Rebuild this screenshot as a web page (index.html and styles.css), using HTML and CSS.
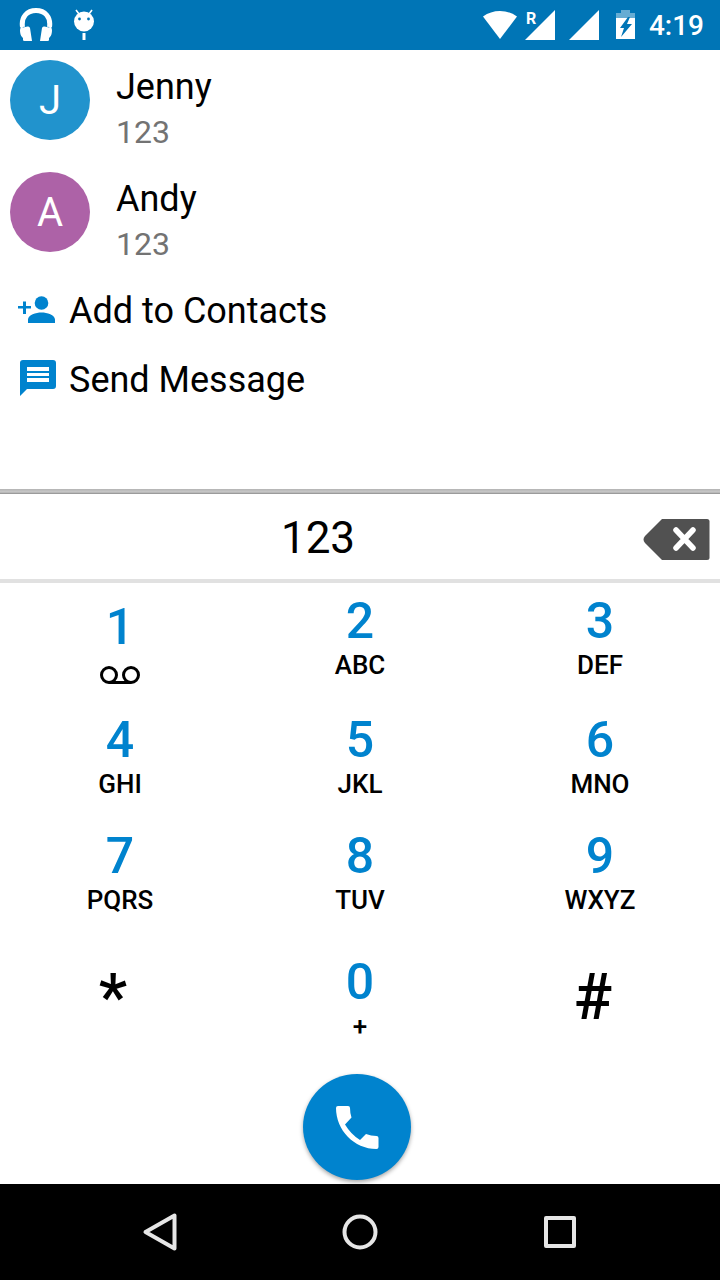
FILE: index.html
```html
<!DOCTYPE html>
<html lang="en">
<head>
<meta charset="utf-8">
<meta name="viewport" content="width=device-width, initial-scale=1">
<title>Dialer</title>
<link rel="stylesheet" href="styles.css">
</head>
<body>
<div class="app">
  <header class="status">
    <div class="status-group">
      <svg class="icon-headphones" width="34" height="34" viewBox="0 0 34 34" aria-hidden="true">
        <path d="M3.500 19C2 9 8 2.500 17 2.500S32 9 30.500 19" fill="none" stroke="#fff" stroke-width="5"/>
        <path d="M2 18L1 22q0 5 2 7l1 1v2q0 1 1.500 1H13l-2-13q-.5-2-2.500-1.500L4 19.500zM32 18l1 4q0 5-2 7l-1 1v2q0 1-1.500 1H21l2-13q.5-2 2.500-1.500l4.500 1z" fill="#fff"/>
      </svg>
      <svg width="20" height="32" viewBox="0 0 20 32" aria-hidden="true">
        <circle cx="10" cy="12.500" r="10" fill="#fff"/>
        <path d="M5 5L2 1M15 5l3-4" stroke="#fff" stroke-width="1.600"/>
        <circle cx="5.500" cy="10" r="1.400" fill="#0075b6"/><circle cx="14.500" cy="10" r="1.400" fill="#0075b6"/>
        <path d="M8.500 24h3v7h-3z" fill="#fff"/>
      </svg>
    </div>
    <div class="status-group status-right">
      <svg class="icon-wifi" width="34" height="30" viewBox="0 0 34 30" aria-hidden="true"><path d="M0 6.500Q7.500 1 17 1t17 5.500L17 29z" fill="#fff"/></svg>
      <span class="roaming"><span class="roaming-mark">R</span><svg width="30" height="30" viewBox="0 0 30 30" aria-hidden="true"><path d="M30 0v30H0z" fill="#fff"/></svg></span>
      <svg class="icon-signal" width="30" height="30" viewBox="0 0 30 30" aria-hidden="true"><path d="M30 0v30H0z" fill="#fff"/></svg>
      <svg class="icon-battery" width="20" height="30" viewBox="0 0 20 30" aria-hidden="true">
        <path d="M0 3h5V0h9v3h5v5H0z" fill="#66acd3"/><path d="M0 8h19v21H0z" fill="#fff"/>
        <path d="M12 7L4 18h4l-3 9L16 14h-5l3-7z" fill="#0075b6"/>
      </svg>
      <time class="clock">4:19</time>
    </div>
  </header>

  <main class="dialer">
    <section class="results">
      <a class="contact" href="#jenny">
        <span class="avatar avatar-blue">J</span>
        <span class="contact-text"><span class="contact-name">Jenny</span><span class="contact-number">123</span></span>
      </a>
      <a class="contact" href="#andy">
        <span class="avatar avatar-purple">A</span>
        <span class="contact-text"><span class="contact-name">Andy</span><span class="contact-number">123</span></span>
      </a>
      <div class="actions">
        <button class="action" type="button">
          <svg width="40" height="40" viewBox="0 0 40 40" aria-hidden="true"><circle cx="23.500" cy="12" r="6.800" fill="#0083ce"/><path d="M10 32v-3.500C10 24 18 21.500 23.500 21.500S37 24 37 28.500V32zM5 10.500h3V15h5v2.500H8V23H5v-5.500H0V15h5z" fill="#0083ce"/></svg>
          Add to Contacts
        </button>
        <button class="action" type="button">
          <svg width="40" height="40" viewBox="0 0 40 40" aria-hidden="true"><path d="M5 0h30q3 0 3 3v23q0 3-3 3H9l-7 7V3q0-3 3-3z" fill="#0083ce"/><path d="M9 7h22v4H9zM9 13h22v3H9zM9 18h22v4H9z" fill="#fff"/></svg>
          Send Message
        </button>
      </div>
    </section>

    <section class="entry">
      <input class="entry-number" type="tel" value="123" aria-label="Phone number">
      <button class="backspace" type="button" aria-label="Delete">
        <svg width="68" height="44" viewBox="0 0 68 44" aria-hidden="true"><path d="M20 1h45q2.500 0 2.500 2.500v36q0 2.500-2.500 2.500H20L3 25q-3-3.500 0-7z" fill="#515151"/><path d="M34 12l17 18M51 12L34 30" stroke="#fff" stroke-width="5.500" stroke-linecap="round"/></svg>
      </button>
    </section>

    <section class="keypad">
      <button class="key key-voicemail" type="button" aria-label="1 voicemail"><span class="digit">1</span>
        <svg width="40" height="18" viewBox="0 0 40 18" aria-hidden="true"><g fill="none" stroke="#000" stroke-width="3"><circle cx="9" cy="9" r="7.500"/><circle cx="31" cy="9" r="7.500"/><path d="M9 16.500h22"/></g></svg></button>
      <button class="key" type="button"><span class="digit">2</span><span class="letters">ABC</span></button>
      <button class="key" type="button"><span class="digit">3</span><span class="letters">DEF</span></button>
      <button class="key" type="button"><span class="digit">4</span><span class="letters">GHI</span></button>
      <button class="key" type="button"><span class="digit">5</span><span class="letters">JKL</span></button>
      <button class="key" type="button"><span class="digit">6</span><span class="letters">MNO</span></button>
      <button class="key" type="button"><span class="digit">7</span><span class="letters">PQRS</span></button>
      <button class="key" type="button"><span class="digit">8</span><span class="letters">TUV</span></button>
      <button class="key" type="button"><span class="digit">9</span><span class="letters">WXYZ</span></button>
      <button class="key key-symbol" type="button">*</button>
      <button class="key" type="button"><span class="digit">0</span><span class="letters">+</span></button>
      <button class="key key-symbol" type="button">#</button>
    </section>

    <div class="call-row">
      <button class="call" type="button" aria-label="Call">
        <svg width="44" height="44" viewBox="0 0 44 44" aria-hidden="true"><path d="M3 1h10q2 0 2 2 0 5 1.500 9.500L10 19.500q6 10 15 15.500l6-6q5 2 10.500 2 2 0 2 2v9q0 2-2 2C19 44 1 25 1 3q0-2 2-2z" fill="#fff"/></svg>
      </button>
    </div>
  </main>

  <nav class="navbar">
    <button type="button" aria-label="Back"><svg width="40" height="40" viewBox="0 0 40 40" aria-hidden="true"><path d="M34.500 3.500v33L5.500 20z"/></svg></button>
    <button type="button" aria-label="Home"><svg width="40" height="40" viewBox="0 0 40 40" aria-hidden="true"><circle cx="20" cy="20" r="15.500"/></svg></button>
    <button type="button" aria-label="Recent apps"><svg width="40" height="40" viewBox="0 0 40 40" aria-hidden="true"><path d="M6 6h28v28H6z"/></svg></button>
  </nav>
</div>
</body>
</html>
```

FILE: styles.css
```css
* { box-sizing: border-box; }
body { margin: 0; font-family: Roboto, "Noto Sans", sans-serif; color: #000; background: #fff; }
button, input { font: inherit; color: inherit; background: none; border: 0; padding: 0; margin: 0; }
button { cursor: pointer; }
svg { display: block; flex: none; }

.app { display: flex; flex-direction: column; min-height: 100vh; }

.status { display: flex; justify-content: space-between; align-items: center; height: 50px; padding: 0 16px 0 19px; background: #0075b6; color: #fff; }
.status-group { display: flex; align-items: center; gap: 21px; }
.status-right { gap: 0; }
.icon-wifi { margin-right: 8px; }
.roaming { position: relative; margin-right: 14px; }
.roaming-mark { position: absolute; left: 1px; top: 1px; font-size: 16px; line-height: 16px; font-weight: 700; }
.icon-signal { margin-right: 17px; }
.icon-battery { margin-right: 13px; }
.clock { font-size: 28px; line-height: 32px; font-weight: 500; padding-top: 2px; }

.dialer { flex: 1; display: flex; flex-direction: column; }
.results { flex: 1; }

.contact { display: flex; gap: 26px; height: 112px; padding: 10px; color: inherit; text-decoration: none; }
.avatar { display: flex; align-items: center; justify-content: center; flex: none; width: 80px; height: 80px; border-radius: 50%; color: #fff; font-size: 40px; }
.avatar-blue { background: #2193cd; }
.avatar-purple { background: #ad62a7; }
.contact-text { display: flex; flex-direction: column; padding-top: 4px; }
.contact-name { font-size: 36px; line-height: 46px; }
.contact-number { font-size: 32px; line-height: 44px; color: #737373; }

.actions { padding-top: 2px; }
.action { display: flex; align-items: center; gap: 11px; width: 100%; height: 69px; padding: 0 18px; font-size: 36px; text-align: left; }

.entry { display: flex; align-items: center; height: 94px; padding: 5px 10px 0 0; border-bottom: 4px solid #e1e1e1; background: linear-gradient(#b4b4b4, #c8c8c8 3px, #8c8c8c 5px, transparent 5px); }
.entry-number { flex: 1; min-width: 0; padding: 3px 0 0; font-size: 44px; line-height: 54px; text-align: center; outline: 0; }
.backspace { padding: 6px 0 0 6px; }

.keypad { display: grid; grid-template-columns: repeat(3, 1fr); grid-template-rows: 119px 116px 126px 117px; align-items: start; padding-top: 13px; }
.key { display: flex; flex-direction: column; align-items: center; gap: 4px; font-weight: 500; }
.digit { font-size: 50px; line-height: 50px; color: #0083ce; }
.letters { font-size: 26px; line-height: 30px; }
.key-voicemail { gap: 14px; padding-top: 6px; }
.key-symbol { padding: 9px 14px 0 0; font-size: 64px; line-height: 64px; }

.call-row { display: flex; justify-content: center; padding: 0 6px 4px 0; }
.call { display: flex; align-items: center; justify-content: center; width: 108px; height: 106px; border-radius: 50%; background: #0083ce; box-shadow: 0 2px 4px rgba(0, 0, 0, .35); }

.navbar { position: relative; display: flex; justify-content: center; gap: 160px; height: 96px; background: #000; }
.navbar svg { fill: none; stroke: #e6e6e6; stroke-width: 4; stroke-linejoin: round; }
```
